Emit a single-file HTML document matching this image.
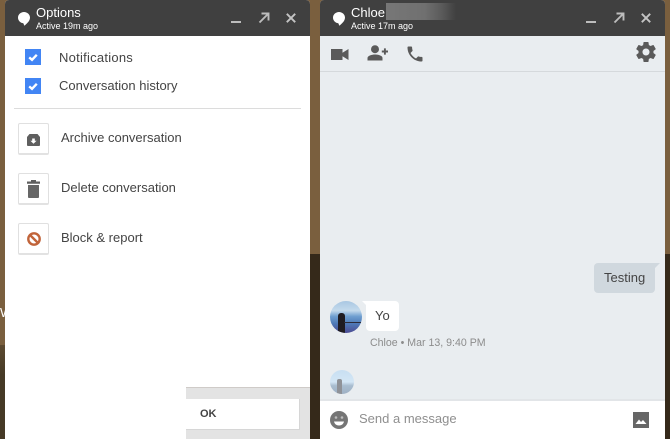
<!DOCTYPE html>
<html>
<head>
<meta charset="utf-8">
<style>
html,body{margin:0;padding:0}
body{width:670px;height:439px;position:relative;overflow:hidden;background:#7a5f3e;font-family:"Liberation Sans",sans-serif;color:#444}
.a{position:absolute;white-space:nowrap}
svg{position:absolute;display:block}
.hd{background:#404040;top:0;height:36px;border-radius:4px 4px 0 0}
.cb{width:16px;height:16px;background:#4285f4;left:25px}
.box{left:18px;width:29px;height:29px;border:1px solid #e0e0e0;border-bottom:2px solid #e2e2e2;border-radius:2px;background:#fff;box-sizing:content-box}
.t13{font-size:13px;color:#444}
</style>
</head>
<body>
<div class="a" style="left:0;top:345px;width:5px;height:94px;background:linear-gradient(180deg,#5c4a30 0,#463a26 30px)"></div>
<div class="a" style="left:310px;top:254px;width:10px;height:185px;background:#35291a"></div>
<div class="a" style="left:665px;top:254px;width:5px;height:185px;background:#35291a"></div>
<div class="a" style="left:0;top:305px;font-size:13px;color:#fff;width:5px;overflow:hidden">W</div>

<!-- Left panel -->
<div class="a" style="left:5px;top:0;width:305px;height:439px;background:#fff;border-radius:4px 4px 0 0"></div>
<div class="a hd" style="left:5px;width:305px"></div>
<svg style="left:18px;top:12px" width="12" height="14" viewBox="0 0 12 14"><path d="M6 0C2.7 0 0 2.5 0 5.6C0 8.6 2.5 11 5.3 11.2L6.4 13.8C7.6 12.4 12 9.5 12 5.6C12 2.5 9.3 0 6 0Z" fill="#fff"/></svg>
<div class="a" style="left:36px;top:5px;font-size:13px;line-height:16px;color:#fff">Options</div>
<div class="a" style="left:36px;top:20px;font-size:9px;line-height:12px;color:#fff">Active 19m ago</div>
<div class="a" style="left:231px;top:21px;width:10px;height:2px;background:#bdbdbd"></div>
<svg style="left:258px;top:12px" width="12" height="12" viewBox="0 0 12 12"><path d="M1.5 10.5L10 2M3.5 1.5H10.5V8.5" fill="none" stroke="#bdbdbd" stroke-width="1.9"/></svg>
<svg style="left:286px;top:13px" width="10" height="10" viewBox="0 0 10 10"><path d="M0.8 0.8L9.2 9.2M9.2 0.8L0.8 9.2" stroke="#c4c4c4" stroke-width="1.9"/></svg>

<div class="a cb" style="top:49px"></div>
<svg style="left:25px;top:49px" width="16" height="16" viewBox="0 0 16 16"><path d="M4.2 8.4L7 10.8L11.8 5.8" fill="none" stroke="#fff" stroke-width="2.4"/></svg>
<div class="a t13" style="left:59px;top:50px;line-height:16px;letter-spacing:.25px">Notifications</div>
<div class="a cb" style="top:78px"></div>
<svg style="left:25px;top:78px" width="16" height="16" viewBox="0 0 16 16"><path d="M4.2 8.4L7 10.8L11.8 5.8" fill="none" stroke="#fff" stroke-width="2.4"/></svg>
<div class="a t13" style="left:59px;top:78px;line-height:16px">Conversation history</div>
<div class="a" style="left:14px;top:108px;width:287px;height:1px;background:#dcdcdc"></div>

<div class="a box" style="top:123px"></div>
<svg style="left:27px;top:134px" width="13" height="12" viewBox="0 0 13 12"><path d="M2.5 0H10.5L13 3V11C13 11.6 12.6 12 12 12H1C0.4 12 0 11.6 0 11V3Z" fill="#5f5f5f"/><path d="M5.2 4.5H7.8V6.8H9.6L6.5 9.8L3.4 6.8H5.2Z" fill="#fff"/></svg>
<div class="a t13" style="left:61px;top:130px;line-height:16px">Archive conversation</div>

<div class="a box" style="top:173px"></div>
<svg style="left:27px;top:180px" width="13" height="18" viewBox="0 0 13 18"><path d="M4 0H9V1.5H13V3.8H0V1.5H4Z" fill="#5f5f5f"/><path d="M1 5H12V17C12 17.6 11.6 18 11 18H2C1.4 18 1 17.6 1 17Z" fill="#666"/></svg>
<div class="a t13" style="left:61px;top:180px;line-height:16px">Delete conversation</div>

<div class="a box" style="top:223px"></div>
<svg style="left:27px;top:232px" width="14" height="14" viewBox="0 0 14 14"><circle cx="7" cy="7" r="5.7" fill="none" stroke="#c1643a" stroke-width="2.4"/><path d="M3 3L11 11" stroke="#c1643a" stroke-width="2.4"/></svg>
<div class="a t13" style="left:61px;top:230px;line-height:16px">Block &amp; report</div>

<div class="a" style="left:186px;top:387px;width:124px;height:52px;background:#e3e3e3;border-top:1px solid #cfcbc8;box-sizing:border-box"></div>
<div class="a" style="left:186px;top:399px;width:114px;height:31px;background:#fff;border-right:1px solid #d6d6d6;border-bottom:1px solid #d6d6d6;box-sizing:border-box"></div>
<div class="a" style="left:200px;top:407px;font-size:11px;font-weight:bold;line-height:14px;color:#444">OK</div>

<!-- Right panel -->
<div class="a" style="left:320px;top:0;width:345px;height:439px;background:#e9edf0;border-radius:4px 4px 0 0"></div>
<div class="a hd" style="left:320px;width:345px"></div>
<svg style="left:333px;top:12px" width="12" height="14" viewBox="0 0 12 14"><path d="M6 0C2.7 0 0 2.5 0 5.6C0 8.6 2.5 11 5.3 11.2L6.4 13.8C7.6 12.4 12 9.5 12 5.6C12 2.5 9.3 0 6 0Z" fill="#fff"/></svg>
<div class="a" style="left:351px;top:5px;font-size:13px;line-height:16px;color:#fff">Chloe</div>
<div class="a" style="left:386px;top:3px;width:70px;height:17px;background:linear-gradient(90deg,#777 0%,#707070 55%,#5a5a5a 80%,#404040 100%)"></div>
<div class="a" style="left:351px;top:20px;font-size:9px;line-height:12px;color:#fff">Active 17m ago</div>
<div class="a" style="left:586px;top:21px;width:10px;height:2px;background:#bdbdbd"></div>
<svg style="left:613px;top:12px" width="12" height="12" viewBox="0 0 12 12"><path d="M1.5 10.5L10 2M3.5 1.5H10.5V8.5" fill="none" stroke="#bdbdbd" stroke-width="1.9"/></svg>
<svg style="left:641px;top:13px" width="10" height="10" viewBox="0 0 10 10"><path d="M0.8 0.8L9.2 9.2M9.2 0.8L0.8 9.2" stroke="#c4c4c4" stroke-width="1.9"/></svg>

<div class="a" style="left:320px;top:71px;width:345px;height:1px;background:#d5d9dc"></div>
<svg style="left:331px;top:49px" width="18" height="11" viewBox="0 0 18 11"><path d="M0 0H11.5V3.8L17.5 0V11L11.5 7.2V11H0Z" fill="#5a5a5a"/></svg>
<svg style="left:367px;top:45px" width="22" height="16" viewBox="0 0 22 16"><circle cx="8" cy="4.2" r="4" fill="#5a5a5a"/><path d="M0.5 15.5V13C0.5 10.6 5 9.5 8 9.5C11 9.5 15.5 10.6 15.5 13V15.5Z" fill="#5a5a5a"/><path d="M14.8 6.5H21M17.9 3.4V9.6" stroke="#5a5a5a" stroke-width="1.9"/></svg>
<svg style="left:405px;top:44px" width="20" height="20" viewBox="0 0 24 24"><path d="M6.62 10.79c1.44 2.83 3.76 5.14 6.59 6.59l2.2-2.2c.27-.27.67-.36 1.02-.24 1.12.37 2.33.57 3.57.57.55 0 1 .45 1 1V20c0 .55-.45 1-1 1C10.61 21 3 13.39 3 4c0-.55.45-1 1-1h3.5c.55 0 1 .45 1 1 0 1.25.2 2.45.57 3.57.11.35.03.74-.25 1.02l-2.2 2.2z" fill="#5a5a5a"/></svg>
<svg style="left:636px;top:42px" width="20" height="20" viewBox="2 2 20 20"><path d="M19.43 12.98c.04-.32.07-.64.07-.98s-.03-.66-.07-.98l2.11-1.65c.19-.15.24-.42.12-.64l-2-3.46c-.12-.22-.39-.3-.61-.22l-2.49 1c-.52-.4-1.08-.73-1.69-.98l-.38-2.65C14.46 2.18 14.25 2 14 2h-4c-.25 0-.46.18-.49.42l-.38 2.65c-.61.25-1.17.59-1.69.98l-2.49-1c-.23-.09-.49 0-.61.22l-2 3.46c-.13.22-.07.49.12.64l2.11 1.65c-.04.32-.07.65-.07.98s.03.66.07.98l-2.11 1.65c-.19.15-.24.42-.12.64l2 3.46c.12.22.39.3.61.22l2.49-1c.52.4 1.08.73 1.69.98l.38 2.65c.03.24.24.42.49.42h4c.25 0 .46-.18.49-.42l.38-2.65c.61-.25 1.17-.59 1.69-.98l2.49 1c.23.09.49 0 .61-.22l2-3.46c.12-.22.07-.49-.12-.64l-2.11-1.65zM12 15.5c-1.93 0-3.5-1.57-3.5-3.5s1.57-3.5 3.5-3.5 3.5 1.57 3.5 3.5-1.57 3.5-3.5 3.5z" fill="#5a5a5a"/></svg>

<!-- Messages -->
<div class="a" style="left:594px;top:263px;width:61px;height:30px;background:#d0d8de;border-radius:4px 0 4px 4px"></div>
<svg style="left:655px;top:263px" width="5" height="5" viewBox="0 0 5 5"><path d="M0 0H5L0 5Z" fill="#d0d8de"/></svg>
<div class="a" style="left:604px;top:270px;font-size:13px;line-height:16px;color:#444">Testing</div>

<div class="a" style="left:330px;top:301px;width:32px;height:32px;border-radius:50%;overflow:hidden;background:linear-gradient(180deg,#a9c7e2 0%,#c4daec 30%,#6f9fd0 48%,#4f7bb8 70%,#4b4a92 100%)">
<div class="a" style="left:8px;top:12px;width:7px;height:20px;background:#1f1c22;border-radius:3px 3px 0 0"></div>
<div class="a" style="left:14px;top:21px;width:18px;height:1px;background:#2b2b3a"></div>
</div>
<svg style="left:362px;top:301px" width="5" height="5" viewBox="0 0 5 5"><path d="M0 0H5V5Z" fill="#fff"/></svg>
<div class="a" style="left:366px;top:301px;width:33px;height:30px;background:#fff;border-radius:0 4px 4px 4px"></div>
<div class="a" style="left:375px;top:308px;font-size:13px;line-height:16px;color:#444">Yo</div>
<div class="a" style="left:370px;top:337px;font-size:10.6px;line-height:13px;color:#8c8c8c">Chloe • Mar 13, 9:40 PM</div>

<div class="a" style="left:330px;top:370px;width:24px;height:24px;border-radius:50%;overflow:hidden;background:linear-gradient(180deg,#c8dff2 0%,#d3e6f5 50%,#a9bdd0 65%,#9fb1c4 100%)">
<div class="a" style="left:7px;top:9px;width:5px;height:15px;background:#8f9298;border-radius:2px 2px 0 0"></div>
</div>

<!-- Input -->
<div class="a" style="left:320px;top:399px;width:345px;height:2px;background:#e2e5e8"></div>
<div class="a" style="left:320px;top:401px;width:345px;height:38px;background:#fff"></div>
<svg style="left:330px;top:411px" width="18" height="18" viewBox="0 0 18 18"><circle cx="9" cy="9" r="9" fill="#757575"/><circle cx="6" cy="6.5" r="1.3" fill="#bdbdbd"/><circle cx="12" cy="6.5" r="1.3" fill="#bdbdbd"/><path d="M4 10.5H14C13.5 13 11.5 14.5 9 14.5C6.5 14.5 4.5 13 4 10.5Z" fill="#fff"/></svg>
<div class="a" style="left:359px;top:411px;font-size:13px;line-height:16px;color:#8f8f8f">Send a message</div>
<svg style="left:633px;top:412px" width="16" height="16" viewBox="0 0 16 16"><rect width="16" height="16" fill="#666"/><path d="M2.5 12L6 7.5L8 10L10 8L13.5 12Z" fill="#fff"/></svg>
</body>
</html>
